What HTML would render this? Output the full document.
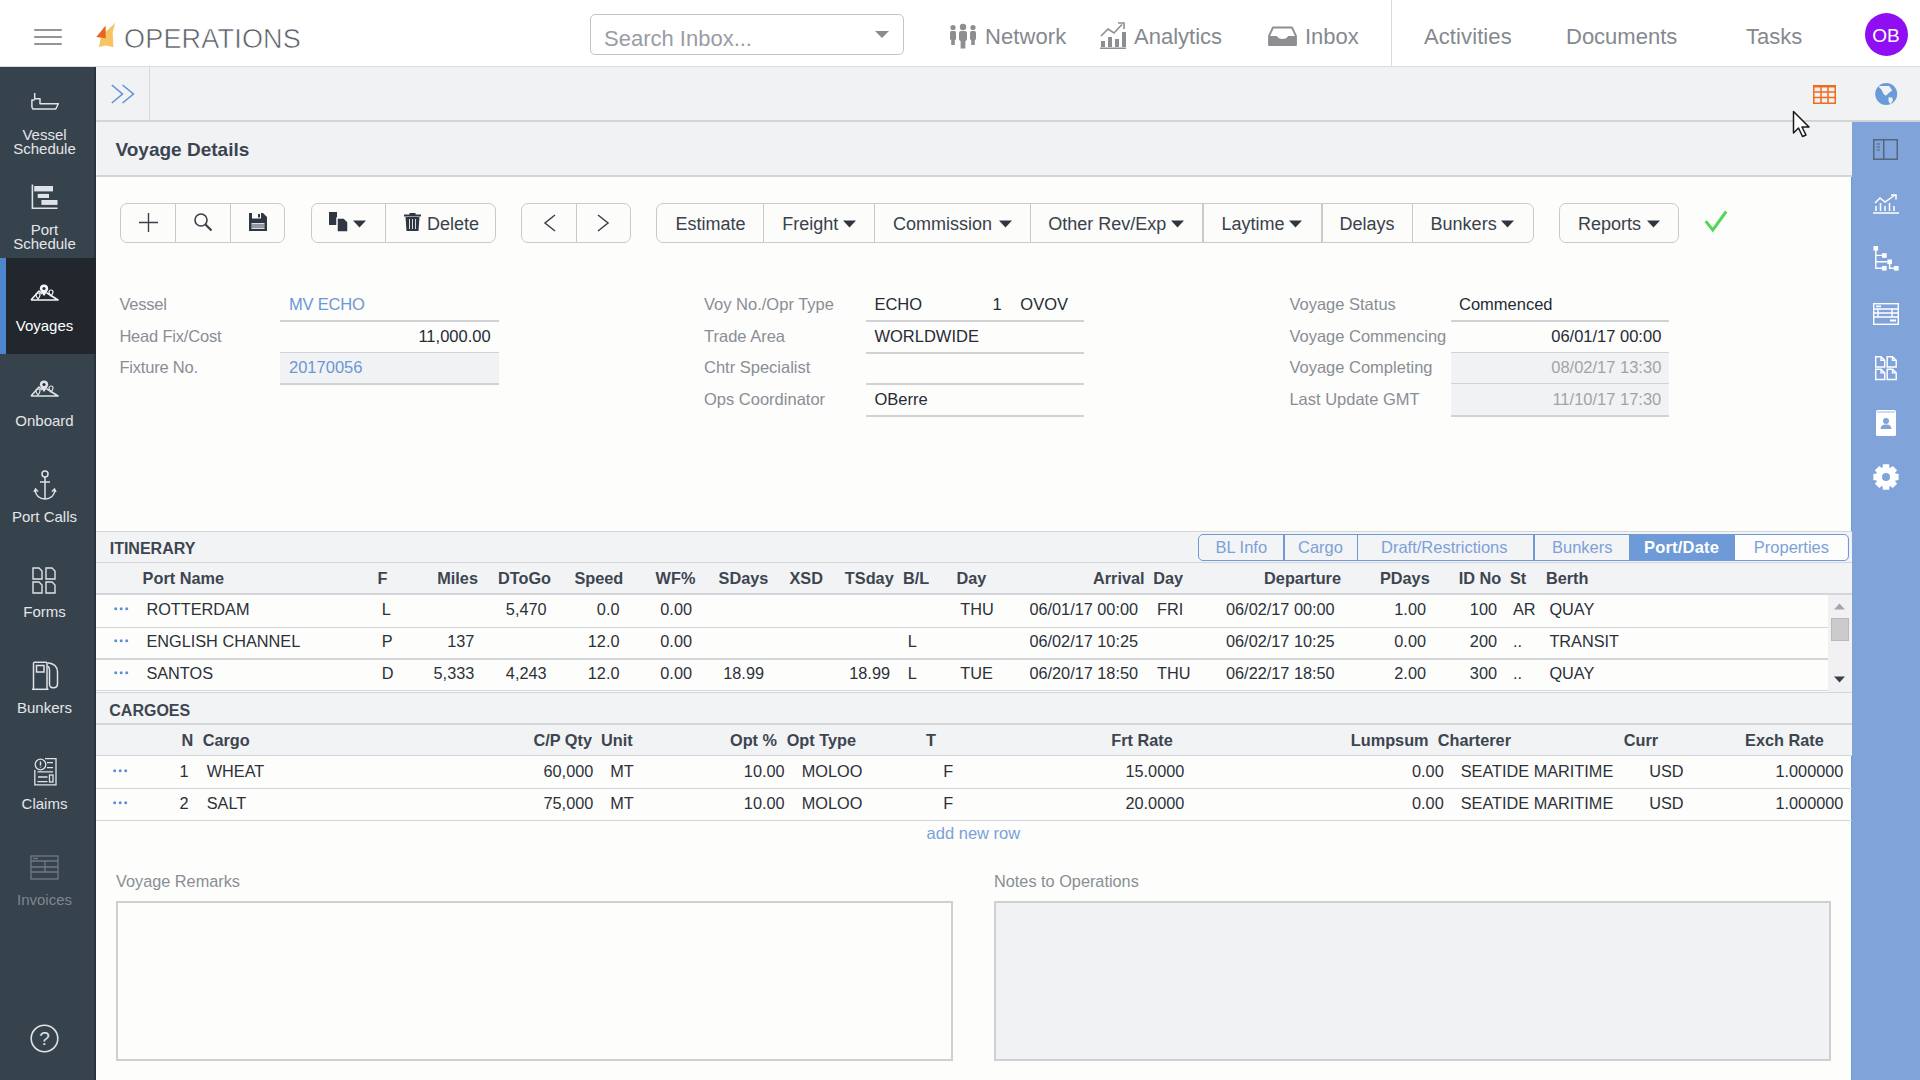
<!DOCTYPE html>
<html><head><meta charset="utf-8">
<style>
*{box-sizing:border-box;margin:0;padding:0}
html,body{width:1920px;height:1080px;overflow:hidden;background:#fdfdfc;font-family:"Liberation Sans",sans-serif;color:#2f353d;position:relative}
.a{position:absolute}
.t{position:absolute;white-space:nowrap;line-height:normal}
svg{position:absolute;overflow:visible}
</style></head><body>
<div class="a" style="left:0px;top:0px;width:1920px;height:66px;background:#fff"></div>
<div class="a" style="left:0px;top:66px;width:1920px;height:1px;background:#d9dbde"></div>
<div class="a" style="left:34px;top:29px;width:28px;height:2px;background:#939599;border-radius:1px"></div>
<div class="a" style="left:34px;top:36px;width:28px;height:2px;background:#939599;border-radius:1px"></div>
<div class="a" style="left:34px;top:43px;width:28px;height:2px;background:#939599;border-radius:1px"></div>
<svg style="left:95px;top:22px" width="22" height="27" viewBox="0 0 22 27">
<path d="M20.2 0.7 L17.7 10.2 L18.3 24.3 L18.9 25.3 L10.7 23.4 L3.8 25 L6 15.5 L11.4 9.2 Z" fill="#f6c462"/>
<path d="M10.7 3.6 L1.3 14.9 L10.7 16.2 Z" fill="#e8651f"/>
</svg>
<div class="t" style="top:24px;font-size:27px;left:124px;color:#555c64;letter-spacing:0.2px;-webkit-text-stroke:0.6px #fff">OPERATIONS</div>
<div class="a" style="left:590px;top:14px;width:314px;height:41px;border:1.5px solid #c3c5c8;border-radius:5px;background:#fff"></div>
<div class="t" style="top:26px;font-size:22px;left:604px;color:#999da3;">Search Inbox...</div>
<svg style="left:875px;top:31px" width="14" height="8"><path d="M0 0H14L7 7Z" fill="#8a8c90"/></svg>
<div class="t" style="top:24px;font-size:22px;left:985px;color:#85898f;letter-spacing:0.1px">Network</div>
<div class="t" style="top:24px;font-size:22px;left:1134px;color:#85898f;">Analytics</div>
<div class="t" style="top:24px;font-size:22px;left:1305px;color:#85898f;">Inbox</div>
<div class="a" style="left:1391px;top:0px;width:1px;height:66px;background:#d9dbde"></div>
<div class="t" style="top:24px;font-size:22px;left:1424px;color:#85898f;letter-spacing:0.1px">Activities</div>
<div class="t" style="top:24px;font-size:22px;left:1566px;color:#85898f;">Documents</div>
<div class="t" style="top:24px;font-size:22px;left:1746px;color:#85898f;">Tasks</div>
<svg style="left:949px;top:24px" width="28" height="25" viewBox="0 0 28 25" fill="#8c8e92">
<circle cx="4" cy="3.5" r="2.6"/><rect x="1" y="7" width="6" height="9" rx="1.5"/><rect x="2.2" y="14" width="3.6" height="7"/>
<circle cx="14" cy="3" r="3.2"/><rect x="10" y="7" width="8" height="10" rx="2"/><rect x="11.6" y="15" width="4.8" height="9.5"/>
<circle cx="24" cy="3.5" r="2.6"/><rect x="21" y="7" width="6" height="9" rx="1.5"/><rect x="22.2" y="14" width="3.6" height="7"/>
</svg>
<svg style="left:1100px;top:22px" width="27" height="27" viewBox="0 0 27 27" fill="#8c8e92">
<rect x="0" y="25.5" width="26" height="1.5"/>
<rect x="1" y="19" width="4" height="6"/><rect x="8" y="15" width="4" height="10"/><rect x="15" y="17" width="4" height="8"/><rect x="22" y="10" width="4" height="15"/>
<path d="M1 14 L8 7 L14 11 L22 2.5" stroke="#8c8e92" stroke-width="1.6" fill="none"/>
<path d="M18 1 L24 1 L24 7" stroke="#8c8e92" stroke-width="1.6" fill="none"/>
</svg>
<svg style="left:1268px;top:26px" width="29" height="20" viewBox="0 0 29 20">
<path d="M1 10 L5 1.5 H24 L28 10 V19 H1 Z" fill="none" stroke="#8c8e92" stroke-width="1.8" stroke-linejoin="round"/>
<path d="M1 10 H9 C10 14 19 14 20 10 H28 V19.5 H1Z" fill="#8c8e92"/>
</svg>
<div class="a" style="left:1865px;top:13px;width:43px;height:43px;background:#8f0ef2;border-radius:50%"></div>
<div class="t" style="top:25px;font-size:19px;left:1586px;width:600px;text-align:center;color:#fff;">OB</div>
<div class="a" style="left:0px;top:67px;width:96px;height:1013px;background:#36424c"></div>
<div class="a" style="left:94px;top:67px;width:1.5px;height:1013px;background:#2a323b"></div>
<div class="a" style="left:0px;top:258px;width:96px;height:96px;background:#22272e"></div>
<div class="a" style="left:0px;top:258px;width:6px;height:96px;background:#4d86cc"></div>
<div class="t" style="top:126px;font-size:15px;left:-255.5px;width:600px;text-align:center;color:#e4e6e9;">Vessel</div>
<div class="t" style="top:140px;font-size:15px;left:-255.5px;width:600px;text-align:center;color:#e4e6e9;">Schedule</div>
<div class="t" style="top:221px;font-size:15px;left:-255.5px;width:600px;text-align:center;color:#e4e6e9;">Port</div>
<div class="t" style="top:235px;font-size:15px;left:-255.5px;width:600px;text-align:center;color:#e4e6e9;">Schedule</div>
<div class="t" style="top:317px;font-size:15px;left:-255.5px;width:600px;text-align:center;color:#ffffff;">Voyages</div>
<div class="t" style="top:412px;font-size:15px;left:-255.5px;width:600px;text-align:center;color:#e4e6e9;">Onboard</div>
<div class="t" style="top:508px;font-size:15px;left:-255.5px;width:600px;text-align:center;color:#e4e6e9;">Port Calls</div>
<div class="t" style="top:603px;font-size:15px;left:-255.5px;width:600px;text-align:center;color:#e4e6e9;">Forms</div>
<div class="t" style="top:699px;font-size:15px;left:-255.5px;width:600px;text-align:center;color:#e4e6e9;">Bunkers</div>
<div class="t" style="top:795px;font-size:15px;left:-255.5px;width:600px;text-align:center;color:#e4e6e9;">Claims</div>
<div class="t" style="top:891px;font-size:15px;left:-255.5px;width:600px;text-align:center;color:#7d8791;">Invoices</div>
<svg style="left:30px;top:92px" width="30" height="19" viewBox="0 0 30 19" fill="none" stroke="#dfe2e6" stroke-width="1.5" stroke-linejoin="round">
<path d="M4.7 1 V6.8 H10 V11.8 H28.3 L25.8 17 H2.8 L1.9 15 V8 H4.7"/>
</svg>
<svg style="left:31px;top:184px" width="28" height="26" viewBox="0 0 28 26">
<path d="M1.4 0.5 V24.2 H26.5" fill="none" stroke="#dfe2e6" stroke-width="1.6"/>
<rect x="3.2" y="2" width="18.8" height="5.4" fill="#dfe2e6"/><rect x="6.7" y="9.9" width="11.3" height="4.1" fill="#dfe2e6"/><rect x="10.4" y="16" width="16.1" height="4.9" fill="#dfe2e6"/>
</svg>
<svg style="left:30px;top:284px" width="29" height="17" viewBox="0 0 29 17">
<path d="M1 16 L9 7 L12 10 M17 9 L28 16 Z M1 16 H28" fill="none" stroke="#f4f5f7" stroke-width="1.6" stroke-linejoin="round"/>
<path d="M14 0.5 C11 0.5 9.8 2.5 9.8 4.5 C9.8 7 14 12 14 12 C14 12 18.2 7 18.2 4.5 C18.2 2.5 17 0.5 14 0.5Z" fill="#f4f5f7"/>
<circle cx="14" cy="4.5" r="1.6" fill="#2a2f36"/>
<path d="M21 6 C19.5 6 19 7 19 8 C19 9.5 21 12 21 12 C21 12 23 9.5 23 8 C23 7 22.5 6 21 6Z" fill="none" stroke="#f4f5f7" stroke-width="1.2"/>
<path d="M8 9 C6.5 9 6 10 6 11 C6 12.5 8 15 8 15 C8 15 10 12.5 10 11 C10 10 9.5 9 8 9Z" fill="none" stroke="#f4f5f7" stroke-width="1.2"/>
</svg>
<svg style="left:30px;top:380px" width="29" height="17" viewBox="0 0 29 17">
<path d="M1 16 L9 7 L12 10 M17 9 L28 16 Z M1 16 H28" fill="none" stroke="#dfe2e6" stroke-width="1.6" stroke-linejoin="round"/>
<path d="M14 0.5 C11 0.5 9.8 2.5 9.8 4.5 C9.8 7 14 12 14 12 C14 12 18.2 7 18.2 4.5 C18.2 2.5 17 0.5 14 0.5Z" fill="#dfe2e6"/>
<circle cx="14" cy="4.5" r="1.6" fill="#2a2f36"/>
<path d="M21 6 C19.5 6 19 7 19 8 C19 9.5 21 12 21 12 C21 12 23 9.5 23 8 C23 7 22.5 6 21 6Z" fill="none" stroke="#dfe2e6" stroke-width="1.2"/>
<path d="M8 9 C6.5 9 6 10 6 11 C6 12.5 8 15 8 15 C8 15 10 12.5 10 11 C10 10 9.5 9 8 9Z" fill="none" stroke="#dfe2e6" stroke-width="1.2"/>
</svg>
<svg style="left:34px;top:470px" width="22" height="31" viewBox="0 0 22 31" fill="none" stroke="#dfe2e6" stroke-width="1.5">
<circle cx="11" cy="4" r="3"/><path d="M11 7 V29"/><path d="M6 12 H16"/><path d="M1 20 C2 26 6 29 11 29 C16 29 20 26 21 20"/><path d="M0 22 L1.5 19 L4 21.5"/><path d="M22 22 L20.5 19 L18 21.5"/>
</svg>
<svg style="left:32px;top:567px" width="25" height="28" viewBox="0 0 25 28" fill="none" stroke="#dfe2e6" stroke-width="1.4">
<path d="M1 1 H7 L10 4 V12 H1Z"/><path d="M14 1 H20 L23 4 V12 H14Z"/><path d="M1 15 H7 L10 18 V26 H1Z"/><path d="M14 15 H20 L23 18 V26 H14Z"/>
</svg>
<svg style="left:31px;top:660px" width="29" height="31" viewBox="0 0 29 31" fill="none" stroke="#dfe2e6" stroke-width="1.5">
<path d="M2.5 29 V3.2 C2.5 2.6 3 2.2 3.5 2.2 H15 C15.5 2.2 16 2.6 16 3.2 V29"/><path d="M1 29.3 H17.5"/><rect x="5.5" y="5.5" width="7.5" height="6.5"/>
<path d="M16.5 2.8 C23 3.5 26.5 7 26.5 12 V24 C26.5 28 22.5 28.5 19.5 27 C18.5 26.5 18.5 25 18.5 24 V10 C18.5 8 17.5 6.5 16.5 6"/>
</svg>
<svg style="left:33px;top:756px" width="25" height="31" viewBox="0 0 25 31" fill="none" stroke="#dfe2e6" stroke-width="1.3">
<path d="M12 2.7 H23 V28.8 H1.8 V14"/><circle cx="7.5" cy="8.5" r="5.3"/><path d="M7.5 5.5 V9.5 M7.5 10.8 V11.6" stroke-width="1.4"/>
<path d="M14 6.6 H20 M14 11.7 H20 M4.5 15.9 H20 M5 21 H14.5 M4.5 25.6 H14.5"/><rect x="16.5" y="19" width="3.5" height="7"/>
</svg>
<svg style="left:30px;top:855px" width="29" height="25" viewBox="0 0 29 25" fill="none" stroke="#6f7a84" stroke-width="1.3">
<rect x="1" y="1" width="27" height="23"/><path d="M1 6 H28 M1 12 H28 M1 17 H28 M15 6 V17"/><path d="M3 3.5 H8"/>
</svg>
<svg style="left:30px;top:1024px" width="29" height="29" viewBox="0 0 29 29">
<circle cx="14.5" cy="14.5" r="13.3" fill="none" stroke="#dfe2e6" stroke-width="1.6"/>
<text x="14.5" y="21" font-family="Liberation Sans" font-size="19" text-anchor="middle" fill="#dfe2e6">?</text>
</svg>
<div class="a" style="left:96px;top:67px;width:1824px;height:53px;background:#f1f2f4"></div>
<div class="a" style="left:96px;top:120px;width:1824px;height:2px;background:#d2d4d7"></div>
<div class="a" style="left:149px;top:67px;width:1px;height:53px;background:#d6d8db"></div>
<svg style="left:111px;top:84px" width="24" height="20" viewBox="0 0 24 20" fill="none" stroke="#5a8fdc" stroke-width="1.5">
<path d="M0.8 1 L11.5 10 L0.8 19"/><path d="M11.5 1 L22.5 10 L11.5 19"/>
</svg>
<svg style="left:1813px;top:85px" width="23" height="19" viewBox="0 0 23 19">
<rect x="0.75" y="0.75" width="21.5" height="17.5" fill="none" stroke="#f26b1d" stroke-width="1.5"/>
<rect x="0" y="0" width="23" height="2.5" fill="#f26b1d"/>
<path d="M0 7 H23 M0 12.5 H23 M8 0 V19 M15 0 V19" stroke="#f26b1d" stroke-width="1.5"/>
</svg>
<svg style="left:1875px;top:83px" width="23" height="23" viewBox="0 0 23 23">
<circle cx="11.2" cy="11" r="11" fill="#6b9ad9"/>
<path d="M3.2 3.3 C6 3 10 2.8 14.3 3.1 L17.2 7.6 L14.3 9.4 L10.9 12.7 L8.7 11.3 L6.5 6.8 Z" fill="#f1f2f4"/>
<path d="M13.5 14.2 L17.2 14.6 L17.9 17.2 L15.4 21.5 L13.5 17.9 Z" fill="#f1f2f4"/>
</svg>
<div class="a" style="left:1852px;top:122px;width:68px;height:958px;background:#80a4da"></div>
<div class="a" style="left:1851px;top:122px;width:1px;height:958px;background:#729ad6"></div>
<svg style="left:1873px;top:139px" width="25" height="21" viewBox="0 0 25 21" fill="none" stroke="#56657b" stroke-width="1.5">
<rect x="0.75" y="0.75" width="23.5" height="19.5"/><path d="M10.75 0.75 V20.25"/><path d="M3.5 5 H7 M3.5 8 H7 M3.5 11 H7" stroke-width="1.2"/>
</svg>
<svg style="left:1873px;top:194px" width="26" height="20" viewBox="0 0 26 20" fill="none" stroke="#ffffff" stroke-width="1.5">
<path d="M0 19 H26"/><path d="M3 17 V12 M7.5 17 V9 M12 17 V12 M16.5 17 V9 M21 17 V12"/>
<path d="M2 9 L7 4 L12 8 L22 1"/><path d="M18 1 H23 V5.5"/>
</svg>
<svg style="left:1873px;top:245px" width="27" height="27" viewBox="0 0 27 27">
<path d="M2.8 4 V23.3 H9 M2.8 10.4 H9 M2.8 16.8 H14.4 M16.6 19 V23.3 H21" fill="none" stroke="#ffffff" stroke-width="1.4"/>
<rect x="0.5" y="1" width="4.6" height="4.6" fill="#ffffff"/><rect x="9" y="8.2" width="4.6" height="4.6" fill="#ffffff"/><rect x="14.4" y="14.5" width="4.6" height="4.6" fill="#ffffff"/><rect x="9" y="21" width="4.6" height="4.6" fill="#ffffff"/><rect x="21" y="21" width="4.6" height="4.6" fill="#ffffff"/>
</svg>
<svg style="left:1873px;top:303px" width="26" height="22" viewBox="0 0 26 22" fill="none" stroke="#ffffff" stroke-width="1.4">
<rect x="0.7" y="0.7" width="24.6" height="20.6"/><path d="M0.7 6 H25.3 M0.7 10 H25.3 M0.7 14 H25.3 M5 6 V14 M19 6 V14"/><path d="M3 3.3 H8 M17 17.5 H23" stroke-width="1.8"/>
</svg>
<svg style="left:1875px;top:356px" width="23" height="25" viewBox="0 0 23 25" fill="none" stroke="#ffffff" stroke-width="1.4">
<path d="M0.7 0.7 H6 L9.7 4.4 V11 H0.7Z M6 0.7 V4.4 H9.7"/><path d="M12.2 0.7 H17.5 L21.2 4.4 V11 H12.2Z M17.5 0.7 V4.4 H21.2"/><path d="M0.7 13.2 H6 L9.7 16.9 V23.5 H0.7Z M6 13.2 V16.9 H9.7"/><path d="M12.2 13.2 H17.5 L21.2 16.9 V23.5 H12.2Z M17.5 13.2 V16.9 H21.2"/>
</svg>
<svg style="left:1876px;top:410px" width="20" height="26" viewBox="0 0 20 26">
<rect x="0" y="0" width="20" height="26" rx="1.5" fill="#ffffff"/><path d="M1 2 H19" stroke="#80a4da" stroke-width="0.8"/>
<circle cx="10" cy="11" r="3" fill="#80a4da"/><path d="M4.5 19 C5 15 7.5 14.5 10 14.5 C12.5 14.5 15 15 15.5 19Z" fill="#80a4da"/>
</svg>
<svg style="left:1873px;top:464px" width="26" height="26" viewBox="0 0 26 26">
<path d="M25.63 9.91 L25.63 16.09 L22.36 16.52 L22.11 17.13 L24.11 19.74 L19.74 24.11 L17.13 22.11 L16.52 22.36 L16.09 25.63 L9.91 25.63 L9.48 22.36 L8.87 22.11 L6.26 24.11 L1.89 19.74 L3.89 17.13 L3.64 16.52 L0.37 16.09 L0.37 9.91 L3.64 9.48 L3.89 8.87 L1.89 6.26 L6.26 1.89 L8.87 3.89 L9.48 3.64 L9.91 0.37 L16.09 0.37 L16.52 3.64 L17.13 3.89 L19.74 1.89 L24.11 6.26 L22.11 8.87 L22.36 9.48 Z" fill="#ffffff"/><circle cx="13" cy="13" r="4" fill="#80a4da"/>
</svg>
<div class="a" style="left:96px;top:122px;width:1756px;height:53px;background:#f1f2f4"></div>
<div class="a" style="left:96px;top:175px;width:1756px;height:2px;background:#d2d4d7"></div>
<div class="a" style="left:96px;top:122px;width:1px;height:53px;background:#fafafa"></div>
<div class="t" style="top:139px;font-size:19px;left:115.5px;color:#3b4450;font-weight:bold;">Voyage Details</div>
<div class="a" style="left:120px;top:203px;width:165px;height:40px;border:1.5px solid #c9cacd;border-radius:7px;background:#fcfcfb"></div>
<div class="a" style="left:174.5px;top:203px;width:1.5px;height:40px;background:#c9cacd"></div>
<div class="a" style="left:229.5px;top:203px;width:1.5px;height:40px;background:#c9cacd"></div>
<div class="a" style="left:311px;top:203px;width:185px;height:40px;border:1.5px solid #c9cacd;border-radius:7px;background:#fcfcfb"></div>
<div class="a" style="left:384.5px;top:203px;width:1.5px;height:40px;background:#c9cacd"></div>
<div class="a" style="left:521px;top:203px;width:110px;height:40px;border:1.5px solid #c9cacd;border-radius:7px;background:#fcfcfb"></div>
<div class="a" style="left:575.5px;top:203px;width:1.5px;height:40px;background:#c9cacd"></div>
<div class="a" style="left:656px;top:203px;width:878px;height:40px;border:1.5px solid #c9cacd;border-radius:7px;background:#fcfcfb"></div>
<div class="a" style="left:762.5px;top:203px;width:1.5px;height:40px;background:#c9cacd"></div>
<div class="a" style="left:873.5px;top:203px;width:1.5px;height:40px;background:#c9cacd"></div>
<div class="a" style="left:1029.5px;top:203px;width:1.5px;height:40px;background:#c9cacd"></div>
<div class="a" style="left:1202.0px;top:203px;width:1.5px;height:40px;background:#c9cacd"></div>
<div class="a" style="left:1321.0px;top:203px;width:1.5px;height:40px;background:#c9cacd"></div>
<div class="a" style="left:1411.5px;top:203px;width:1.5px;height:40px;background:#c9cacd"></div>
<div class="a" style="left:1559px;top:203px;width:120px;height:40px;border:1.5px solid #c9cacd;border-radius:7px;background:#fcfcfb"></div>
<svg style="left:139px;top:213px" width="19" height="19"><path d="M9.5 0V19M0 9.5H19" stroke="#3a3f4a" stroke-width="1.4"/></svg>
<svg style="left:194px;top:213px" width="19" height="19" fill="none" stroke="#3a3f4a" stroke-width="1.6"><circle cx="7" cy="7" r="6"/><path d="M11.5 11.5L17.5 17.5" stroke-width="2.2"/></svg>
<svg style="left:249px;top:213px" width="18" height="18" viewBox="0 0 18 18">
<path d="M0 0H14L18 4V18H0Z" fill="#2e3742"/><rect x="3" y="0" width="9" height="5.5" fill="#fcfcfb"/><rect x="9" y="1" width="2" height="3.5" fill="#2e3742"/>
<rect x="2.5" y="10" width="13" height="6" fill="#d9dbde"/><path d="M2.5 12H15.5M2.5 14H15.5" stroke="#2e3742" stroke-width="0.8"/>
</svg>
<svg style="left:329px;top:212px" width="20" height="20" viewBox="0 0 20 20">
<rect x="0" y="0" width="8" height="13" fill="#2e3742"/><path d="M8 6H15L19 10V20H8Z" fill="#2e3742" stroke="#fcfcfb" stroke-width="1.5"/>
</svg>
<svg style="left:353px;top:220px" width="13" height="8"><path d="M0 0.5H13L6.5 7.5Z" fill="#2f3640"/></svg>
<svg style="left:404px;top:213px" width="17" height="18" viewBox="0 0 17 18">
<rect x="0" y="1.5" width="17" height="2" fill="#2e3742"/><rect x="5.5" y="0" width="6" height="2" fill="#2e3742"/>
<path d="M1.5 4H15.5L14.5 18H2.5Z" fill="#2e3742"/><path d="M5.5 6V16M8.5 6V16M11.5 6V16" stroke="#d9dbde" stroke-width="1"/>
</svg>
<div class="t" style="top:214px;font-size:18px;left:427px;color:#39414b;">Delete</div>
<svg style="left:543px;top:214px" width="13" height="18" fill="none" stroke="#3a3f4a" stroke-width="1.5"><path d="M12 1L2 9L12 17"/></svg>
<svg style="left:597px;top:214px" width="13" height="18" fill="none" stroke="#3a3f4a" stroke-width="1.5"><path d="M1 1L11 9L1 17"/></svg>
<div class="t" style="top:214px;font-size:18px;left:675.5px;color:#39414b;">Estimate</div>
<div class="t" style="top:214px;font-size:18px;left:782.3px;color:#39414b;">Freight</div>
<svg style="left:843px;top:220px" width="13" height="8"><path d="M0 0.5H13L6.5 7.5Z" fill="#2f3640"/></svg>
<div class="t" style="top:214px;font-size:18px;left:893px;color:#39414b;">Commission</div>
<svg style="left:998.5px;top:220px" width="13" height="8"><path d="M0 0.5H13L6.5 7.5Z" fill="#2f3640"/></svg>
<div class="t" style="top:214px;font-size:18px;left:1048.3px;color:#39414b;">Other Rev/Exp</div>
<svg style="left:1171px;top:220px" width="13" height="8"><path d="M0 0.5H13L6.5 7.5Z" fill="#2f3640"/></svg>
<div class="t" style="top:214px;font-size:18px;left:1221.5px;color:#39414b;">Laytime</div>
<svg style="left:1289px;top:220px" width="13" height="8"><path d="M0 0.5H13L6.5 7.5Z" fill="#2f3640"/></svg>
<div class="t" style="top:214px;font-size:18px;left:1339.6px;color:#39414b;">Delays</div>
<div class="t" style="top:214px;font-size:18px;left:1430.6px;color:#39414b;">Bunkers</div>
<svg style="left:1500.5px;top:220px" width="13" height="8"><path d="M0 0.5H13L6.5 7.5Z" fill="#2f3640"/></svg>
<div class="t" style="top:214px;font-size:18px;left:1578px;color:#39414b;">Reports</div>
<svg style="left:1646.5px;top:220px" width="13" height="8"><path d="M0 0.5H13L6.5 7.5Z" fill="#2f3640"/></svg>
<svg style="left:1703px;top:209px" width="26" height="25" viewBox="0 0 26 25">
<path d="M2.7 12.1 L9.8 21 L23.2 2.5" fill="none" stroke="#55d65b" stroke-width="3" stroke-linejoin="miter"/>
</svg>
<div class="t" style="top:295px;font-size:16.5px;left:119.4px;color:#8a8e94;letter-spacing:-0.2px">Vessel</div>
<div class="t" style="top:327px;font-size:16.5px;left:119.4px;color:#8a8e94;letter-spacing:-0.2px">Head Fix/Cost</div>
<div class="t" style="top:358px;font-size:16.5px;left:119.4px;color:#8a8e94;letter-spacing:-0.2px">Fixture No.</div>
<div class="a" style="left:280px;top:320px;width:219px;height:1.5px;background:#d0d2d5"></div>
<div class="a" style="left:280px;top:352px;width:219px;height:1.5px;background:#d0d2d5"></div>
<div class="a" style="left:280px;top:353px;width:219px;height:30px;background:#f1f2f4"></div>
<div class="a" style="left:280px;top:383px;width:219px;height:1.5px;background:#d0d2d5"></div>
<div class="t" style="top:295px;font-size:16.5px;left:289px;color:#6b97d6;letter-spacing:-0.2px">MV ECHO</div>
<div class="t" style="top:327px;font-size:16.5px;right:1429.4px;color:#262b33;">11,000.00</div>
<div class="t" style="top:358px;font-size:16.5px;left:289px;color:#6b97d6;">20170056</div>
<div class="t" style="top:295px;font-size:16.5px;left:704px;color:#8a8e94;">Voy No./Opr Type</div>
<div class="t" style="top:327px;font-size:16.5px;left:704px;color:#8a8e94;">Trade Area</div>
<div class="t" style="top:358px;font-size:16.5px;left:704px;color:#8a8e94;">Chtr Specialist</div>
<div class="t" style="top:390px;font-size:16.5px;left:704px;color:#8a8e94;">Ops Coordinator</div>
<div class="a" style="left:866px;top:320px;width:218px;height:1.5px;background:#d0d2d5"></div>
<div class="a" style="left:866px;top:352px;width:218px;height:1.5px;background:#d0d2d5"></div>
<div class="a" style="left:866px;top:383px;width:218px;height:1.5px;background:#d0d2d5"></div>
<div class="a" style="left:866px;top:415px;width:218px;height:1.5px;background:#d0d2d5"></div>
<div class="t" style="top:295px;font-size:16.5px;left:874.4px;color:#262b33;">ECHO</div>
<div class="t" style="top:295px;font-size:16.5px;right:918.4px;color:#262b33;">1</div>
<div class="t" style="top:295px;font-size:16.5px;left:1020.3px;color:#262b33;">OVOV</div>
<div class="t" style="top:327px;font-size:16.5px;left:874.4px;color:#262b33;">WORLDWIDE</div>
<div class="t" style="top:390px;font-size:16.5px;left:874.4px;color:#262b33;">OBerre</div>
<div class="t" style="top:295px;font-size:16.5px;left:1289.4px;color:#8a8e94;">Voyage Status</div>
<div class="t" style="top:327px;font-size:16.5px;left:1289.4px;color:#8a8e94;">Voyage Commencing</div>
<div class="t" style="top:358px;font-size:16.5px;left:1289.4px;color:#8a8e94;">Voyage Completing</div>
<div class="t" style="top:390px;font-size:16.5px;left:1289.4px;color:#8a8e94;">Last Update GMT</div>
<div class="a" style="left:1451px;top:320px;width:218px;height:1.5px;background:#d0d2d5"></div>
<div class="a" style="left:1451px;top:352px;width:218px;height:1.5px;background:#d0d2d5"></div>
<div class="a" style="left:1451px;top:353px;width:218px;height:30px;background:#f1f2f4"></div>
<div class="a" style="left:1451px;top:383px;width:218px;height:1.5px;background:#d0d2d5"></div>
<div class="a" style="left:1451px;top:384px;width:218px;height:31px;background:#f1f2f4"></div>
<div class="a" style="left:1451px;top:415px;width:218px;height:1.5px;background:#d0d2d5"></div>
<div class="t" style="top:295px;font-size:16.5px;left:1459px;color:#262b33;">Commenced</div>
<div class="t" style="top:327px;font-size:16.5px;right:258.70000000000005px;color:#262b33;">06/01/17 00:00</div>
<div class="t" style="top:358px;font-size:16.5px;right:258.70000000000005px;color:#a0a4a9;">08/02/17 13:30</div>
<div class="t" style="top:390px;font-size:16.5px;right:258.70000000000005px;color:#a0a4a9;">11/10/17 17:30</div>
<div class="a" style="left:96px;top:531px;width:1756px;height:1.5px;background:#d3d5d8"></div>
<div class="a" style="left:96px;top:532px;width:1756px;height:30px;background:#f2f3f5"></div>
<div class="a" style="left:96px;top:562px;width:1756px;height:1.5px;background:#d3d5d8"></div>
<div class="t" style="top:540px;font-size:16px;left:109.7px;color:#3d4550;font-weight:bold;">ITINERARY</div>
<div class="a" style="left:1198px;top:534px;width:651px;height:27px;border:1.5px solid #6f9ad6;border-radius:5px;background:#f3f4f6"></div>
<div class="a" style="left:1734px;top:535px;width:113px;height:25px;background:#fdfdfd;border-radius:0 4px 4px 0"></div>
<div class="a" style="left:1629px;top:535px;width:105px;height:25px;background:#6e9ad8"></div>
<div class="a" style="left:1283.0px;top:534px;width:1.5px;height:27px;background:#6f9ad6"></div>
<div class="a" style="left:1356.5px;top:534px;width:1.5px;height:27px;background:#6f9ad6"></div>
<div class="a" style="left:1533.0px;top:534px;width:1.5px;height:27px;background:#6f9ad6"></div>
<div class="a" style="left:1628.5px;top:534px;width:1.5px;height:27px;background:#6f9ad6"></div>
<div class="a" style="left:1733.0px;top:534px;width:1.5px;height:27px;background:#6f9ad6"></div>
<div class="t" style="top:538px;font-size:16.5px;left:1215.4px;color:#7ba1d8;">BL Info</div>
<div class="t" style="top:538px;font-size:16.5px;left:1298px;color:#7ba1d8;">Cargo</div>
<div class="t" style="top:538px;font-size:16.5px;left:1381px;color:#7ba1d8;">Draft/Restrictions</div>
<div class="t" style="top:538px;font-size:16.5px;left:1552px;color:#7ba1d8;">Bunkers</div>
<div class="t" style="top:538px;font-size:16.5px;left:1644px;color:#fff;font-weight:bold;letter-spacing:0.2px">Port/Date</div>
<div class="t" style="top:538px;font-size:16.5px;left:1753.8px;color:#7ba1d8;">Properties</div>
<div class="a" style="left:96px;top:563px;width:1756px;height:30px;background:#f2f3f5"></div>
<div class="a" style="left:96px;top:593px;width:1756px;height:1.5px;background:#d3d5d8"></div>
<div class="t" style="top:569px;font-size:16.3px;left:142.6px;color:#3d4550;font-weight:bold;">Port Name</div>
<div class="t" style="top:569px;font-size:16.3px;left:377.5px;color:#3d4550;font-weight:bold;">F</div>
<div class="t" style="top:569px;font-size:16.3px;right:1442px;color:#3d4550;font-weight:bold;">Miles</div>
<div class="t" style="top:569px;font-size:16.3px;right:1369px;color:#3d4550;font-weight:bold;">DToGo</div>
<div class="t" style="top:569px;font-size:16.3px;right:1296.7px;color:#3d4550;font-weight:bold;">Speed</div>
<div class="t" style="top:569px;font-size:16.3px;right:1224.6px;color:#3d4550;font-weight:bold;">WF%</div>
<div class="t" style="top:569px;font-size:16.3px;right:1151.7px;color:#3d4550;font-weight:bold;">SDays</div>
<div class="t" style="top:569px;font-size:16.3px;right:1097.1px;color:#3d4550;font-weight:bold;">XSD</div>
<div class="t" style="top:569px;font-size:16.3px;right:1026.3px;color:#3d4550;font-weight:bold;">TSday</div>
<div class="t" style="top:569px;font-size:16.3px;left:903px;color:#3d4550;font-weight:bold;">B/L</div>
<div class="t" style="top:569px;font-size:16.3px;left:956.5px;color:#3d4550;font-weight:bold;">Day</div>
<div class="t" style="top:569px;font-size:16.3px;right:775.4000000000001px;color:#3d4550;font-weight:bold;">Arrival</div>
<div class="t" style="top:569px;font-size:16.3px;left:1153.3px;color:#3d4550;font-weight:bold;">Day</div>
<div class="t" style="top:569px;font-size:16.3px;right:579px;color:#3d4550;font-weight:bold;">Departure</div>
<div class="t" style="top:569px;font-size:16.3px;right:490.29999999999995px;color:#3d4550;font-weight:bold;">PDays</div>
<div class="t" style="top:569px;font-size:16.3px;right:418.79999999999995px;color:#3d4550;font-weight:bold;">ID No</div>
<div class="t" style="top:569px;font-size:16.3px;left:1510px;color:#3d4550;font-weight:bold;">St</div>
<div class="t" style="top:569px;font-size:16.3px;left:1545.9px;color:#3d4550;font-weight:bold;">Berth</div>
<div class="a" style="left:96px;top:626.5px;width:1732px;height:1.5px;background:#d3d5d8"></div>
<div class="a" style="left:96px;top:658px;width:1732px;height:1.5px;background:#d3d5d8"></div>
<div class="a" style="left:96px;top:689.5px;width:1732px;height:1.5px;background:#d3d5d8"></div>
<div class="a" style="left:96px;top:691.5px;width:1756px;height:1.5px;background:#d3d5d8"></div>
<svg style="left:113.5px;top:607.4px" width="15" height="4"><circle cx="1.7" cy="1.7" r="1.5" fill="#5b8fd8"/><circle cx="7.2" cy="1.7" r="1.5" fill="#5b8fd8"/><circle cx="12.7" cy="1.7" r="1.5" fill="#5b8fd8"/></svg>
<div class="t" style="top:600px;font-size:16.3px;left:146.4px;color:#2c3139;">ROTTERDAM</div>
<div class="t" style="top:600px;font-size:16.3px;left:381.8px;color:#2c3139;">L</div>
<div class="t" style="top:600px;font-size:16.3px;right:1373.4px;color:#2c3139;">5,470</div>
<div class="t" style="top:600px;font-size:16.3px;right:1300.5px;color:#2c3139;">0.0</div>
<div class="t" style="top:600px;font-size:16.3px;right:1228px;color:#2c3139;">0.00</div>
<div class="t" style="top:600px;font-size:16.3px;left:960.2px;color:#2c3139;">THU</div>
<div class="t" style="top:600px;font-size:16.3px;left:1029.4px;color:#2c3139;">06/01/17 00:00</div>
<div class="t" style="top:600px;font-size:16.3px;left:1157px;color:#2c3139;">FRI</div>
<div class="t" style="top:600px;font-size:16.3px;left:1226px;color:#2c3139;">06/02/17 00:00</div>
<div class="t" style="top:600px;font-size:16.3px;right:494px;color:#2c3139;">1.00</div>
<div class="t" style="top:600px;font-size:16.3px;right:423px;color:#2c3139;">100</div>
<div class="t" style="top:600px;font-size:16.3px;left:1513px;color:#2c3139;">AR</div>
<div class="t" style="top:600px;font-size:16.3px;left:1549.4px;color:#2c3139;">QUAY</div>
<svg style="left:113.5px;top:639px" width="15" height="4"><circle cx="1.7" cy="1.7" r="1.5" fill="#5b8fd8"/><circle cx="7.2" cy="1.7" r="1.5" fill="#5b8fd8"/><circle cx="12.7" cy="1.7" r="1.5" fill="#5b8fd8"/></svg>
<div class="t" style="top:632px;font-size:16.3px;left:146.4px;color:#2c3139;">ENGLISH CHANNEL</div>
<div class="t" style="top:632px;font-size:16.3px;left:381.8px;color:#2c3139;">P</div>
<div class="t" style="top:632px;font-size:16.3px;right:1445.7px;color:#2c3139;">137</div>
<div class="t" style="top:632px;font-size:16.3px;right:1300.5px;color:#2c3139;">12.0</div>
<div class="t" style="top:632px;font-size:16.3px;right:1228px;color:#2c3139;">0.00</div>
<div class="t" style="top:632px;font-size:16.3px;left:907.7px;color:#2c3139;">L</div>
<div class="t" style="top:632px;font-size:16.3px;left:1029.4px;color:#2c3139;">06/02/17 10:25</div>
<div class="t" style="top:632px;font-size:16.3px;left:1226px;color:#2c3139;">06/02/17 10:25</div>
<div class="t" style="top:632px;font-size:16.3px;right:494px;color:#2c3139;">0.00</div>
<div class="t" style="top:632px;font-size:16.3px;right:423px;color:#2c3139;">200</div>
<div class="t" style="top:632px;font-size:16.3px;left:1513px;color:#2c3139;">..</div>
<div class="t" style="top:632px;font-size:16.3px;left:1549.4px;color:#2c3139;">TRANSIT</div>
<svg style="left:113.5px;top:670.6px" width="15" height="4"><circle cx="1.7" cy="1.7" r="1.5" fill="#5b8fd8"/><circle cx="7.2" cy="1.7" r="1.5" fill="#5b8fd8"/><circle cx="12.7" cy="1.7" r="1.5" fill="#5b8fd8"/></svg>
<div class="t" style="top:664px;font-size:16.3px;left:146.4px;color:#2c3139;">SANTOS</div>
<div class="t" style="top:664px;font-size:16.3px;left:381.8px;color:#2c3139;">D</div>
<div class="t" style="top:664px;font-size:16.3px;right:1445.7px;color:#2c3139;">5,333</div>
<div class="t" style="top:664px;font-size:16.3px;right:1373.4px;color:#2c3139;">4,243</div>
<div class="t" style="top:664px;font-size:16.3px;right:1300.5px;color:#2c3139;">12.0</div>
<div class="t" style="top:664px;font-size:16.3px;right:1228px;color:#2c3139;">0.00</div>
<div class="t" style="top:664px;font-size:16.3px;right:1156px;color:#2c3139;">18.99</div>
<div class="t" style="top:664px;font-size:16.3px;right:1030px;color:#2c3139;">18.99</div>
<div class="t" style="top:664px;font-size:16.3px;left:907.7px;color:#2c3139;">L</div>
<div class="t" style="top:664px;font-size:16.3px;left:960.2px;color:#2c3139;">TUE</div>
<div class="t" style="top:664px;font-size:16.3px;left:1029.4px;color:#2c3139;">06/20/17 18:50</div>
<div class="t" style="top:664px;font-size:16.3px;left:1157px;color:#2c3139;">THU</div>
<div class="t" style="top:664px;font-size:16.3px;left:1226px;color:#2c3139;">06/22/17 18:50</div>
<div class="t" style="top:664px;font-size:16.3px;right:494px;color:#2c3139;">2.00</div>
<div class="t" style="top:664px;font-size:16.3px;right:423px;color:#2c3139;">300</div>
<div class="t" style="top:664px;font-size:16.3px;left:1513px;color:#2c3139;">..</div>
<div class="t" style="top:664px;font-size:16.3px;left:1549.4px;color:#2c3139;">QUAY</div>
<div class="a" style="left:1828px;top:594.5px;width:24px;height:97px;background:#f1f1f3"></div>
<div class="a" style="left:1831px;top:618px;width:18px;height:23px;background:#cbcacc;border:1px solid #b9b9bb"></div>
<svg style="left:1834px;top:603px" width="11" height="7"><path d="M0 6.5H11L5.5 0.5Z" fill="#a3a6ab"/></svg>
<svg style="left:1834px;top:676px" width="11" height="7"><path d="M0 0.5H11L5.5 6.5Z" fill="#3a3f46"/></svg>
<div class="a" style="left:96px;top:693px;width:1756px;height:30px;background:#f2f3f5"></div>
<div class="a" style="left:96px;top:723px;width:1756px;height:1.5px;background:#d3d5d8"></div>
<div class="t" style="top:702px;font-size:16px;left:109.3px;color:#3d4550;font-weight:bold;">CARGOES</div>
<div class="a" style="left:96px;top:724.5px;width:1756px;height:30px;background:#f2f3f5"></div>
<div class="a" style="left:96px;top:754.5px;width:1756px;height:1.5px;background:#d3d5d8"></div>
<div class="t" style="top:731px;font-size:16.3px;right:1726.7px;color:#3d4550;font-weight:bold;">N</div>
<div class="t" style="top:731px;font-size:16.3px;left:202.7px;color:#3d4550;font-weight:bold;">Cargo</div>
<div class="t" style="top:731px;font-size:16.3px;right:1328px;color:#3d4550;font-weight:bold;">C/P Qty</div>
<div class="t" style="top:731px;font-size:16.3px;left:601px;color:#3d4550;font-weight:bold;">Unit</div>
<div class="t" style="top:731px;font-size:16.3px;right:1143px;color:#3d4550;font-weight:bold;">Opt %</div>
<div class="t" style="top:731px;font-size:16.3px;left:786.7px;color:#3d4550;font-weight:bold;">Opt Type</div>
<div class="t" style="top:731px;font-size:16.3px;left:926px;color:#3d4550;font-weight:bold;">T</div>
<div class="t" style="top:731px;font-size:16.3px;right:747.2px;color:#3d4550;font-weight:bold;">Frt Rate</div>
<div class="t" style="top:731px;font-size:16.3px;right:491.4000000000001px;color:#3d4550;font-weight:bold;">Lumpsum</div>
<div class="t" style="top:731px;font-size:16.3px;left:1437.7px;color:#3d4550;font-weight:bold;">Charterer</div>
<div class="t" style="top:731px;font-size:16.3px;left:1623.8px;color:#3d4550;font-weight:bold;">Curr</div>
<div class="t" style="top:731px;font-size:16.3px;right:96.20000000000005px;color:#3d4550;font-weight:bold;">Exch Rate</div>
<div class="a" style="left:96px;top:787.5px;width:1756px;height:1.5px;background:#d3d5d8"></div>
<div class="a" style="left:96px;top:819.5px;width:1756px;height:1.5px;background:#d3d5d8"></div>
<svg style="left:113.3px;top:769.3px" width="15" height="4"><circle cx="1.7" cy="1.7" r="1.5" fill="#5b8fd8"/><circle cx="7.2" cy="1.7" r="1.5" fill="#5b8fd8"/><circle cx="12.7" cy="1.7" r="1.5" fill="#5b8fd8"/></svg>
<div class="t" style="top:762px;font-size:16.3px;right:1731.5px;color:#2c3139;">1</div>
<div class="t" style="top:762px;font-size:16.3px;left:206.7px;color:#2c3139;">WHEAT</div>
<div class="t" style="top:762px;font-size:16.3px;right:1326.7px;color:#2c3139;">60,000</div>
<div class="t" style="top:762px;font-size:16.3px;left:610.3px;color:#2c3139;">MT</div>
<div class="t" style="top:762px;font-size:16.3px;right:1135.4px;color:#2c3139;">10.00</div>
<div class="t" style="top:762px;font-size:16.3px;left:801.8px;color:#2c3139;">MOLOO</div>
<div class="t" style="top:762px;font-size:16.3px;left:943.2px;color:#2c3139;">F</div>
<div class="t" style="top:762px;font-size:16.3px;right:735.7px;color:#2c3139;">15.0000</div>
<div class="t" style="top:762px;font-size:16.3px;right:476.29999999999995px;color:#2c3139;">0.00</div>
<div class="t" style="top:762px;font-size:16.3px;left:1460.7px;color:#2c3139;">SEATIDE MARITIME</div>
<div class="t" style="top:762px;font-size:16.3px;left:1649.2px;color:#2c3139;">USD</div>
<div class="t" style="top:762px;font-size:16.3px;right:76.59999999999991px;color:#2c3139;">1.000000</div>
<svg style="left:113.3px;top:801.3px" width="15" height="4"><circle cx="1.7" cy="1.7" r="1.5" fill="#5b8fd8"/><circle cx="7.2" cy="1.7" r="1.5" fill="#5b8fd8"/><circle cx="12.7" cy="1.7" r="1.5" fill="#5b8fd8"/></svg>
<div class="t" style="top:794px;font-size:16.3px;right:1731.5px;color:#2c3139;">2</div>
<div class="t" style="top:794px;font-size:16.3px;left:206.7px;color:#2c3139;">SALT</div>
<div class="t" style="top:794px;font-size:16.3px;right:1326.7px;color:#2c3139;">75,000</div>
<div class="t" style="top:794px;font-size:16.3px;left:610.3px;color:#2c3139;">MT</div>
<div class="t" style="top:794px;font-size:16.3px;right:1135.4px;color:#2c3139;">10.00</div>
<div class="t" style="top:794px;font-size:16.3px;left:801.8px;color:#2c3139;">MOLOO</div>
<div class="t" style="top:794px;font-size:16.3px;left:943.2px;color:#2c3139;">F</div>
<div class="t" style="top:794px;font-size:16.3px;right:735.7px;color:#2c3139;">20.0000</div>
<div class="t" style="top:794px;font-size:16.3px;right:476.29999999999995px;color:#2c3139;">0.00</div>
<div class="t" style="top:794px;font-size:16.3px;left:1460.7px;color:#2c3139;">SEATIDE MARITIME</div>
<div class="t" style="top:794px;font-size:16.3px;left:1649.2px;color:#2c3139;">USD</div>
<div class="t" style="top:794px;font-size:16.3px;right:76.59999999999991px;color:#2c3139;">1.000000</div>
<div class="t" style="top:824px;font-size:16.5px;left:926.6px;color:#7aa1d9;">add new row</div>
<div class="t" style="top:872px;font-size:16.3px;left:116px;color:#8a8e94;">Voyage Remarks</div>
<div class="t" style="top:872px;font-size:16.3px;left:994px;color:#8a8e94;">Notes to Operations</div>
<div class="a" style="left:116px;top:901px;width:837px;height:160px;border:2px solid #cfd0d2;background:#fdfdfc"></div>
<div class="a" style="left:994px;top:901px;width:837px;height:160px;border:2px solid #cfd0d2;background:#f1f2f4"></div>
<svg style="left:1792px;top:110px" width="20" height="28" viewBox="0 0 20 28">
<path d="M1.5 1.5 V23 L6.5 18 L10.5 26.5 L14 25 L10 17 H17 Z" fill="#fff" stroke="#1a1a1a" stroke-width="1.5" stroke-linejoin="round"/>
</svg>
</body></html>
